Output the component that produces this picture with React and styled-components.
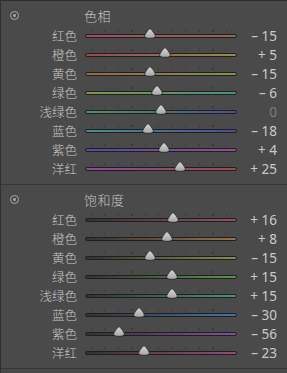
import styled, { createGlobalStyle } from 'styled-components';

const Global = createGlobalStyle`
  body {
    margin: 0;
    background: #4a4a4a;
    font-family: "Noto Sans", "Noto Sans CJK SC", sans-serif;
  }
`;

const Panel = styled.div`
  width: 287px;
  height: 373px;
  box-sizing: border-box;
  background: #4a4a4a;
  border-top: 1px solid #2c2c2c;
  border-left: 1px solid #303030;
  overflow: hidden;
`;

const Section = styled.div`
  padding: 3px 0 6px;
  border-bottom: 1px solid #363636;
`;

const Header = styled.div`
  height: 22px;
  display: grid;
  grid-template-columns: 83px 1fr;
  align-items: center;
`;

const Toggle = styled.span`
  justify-self: start;
  margin-left: 9px;
  width: 9px;
  height: 9px;
  border-radius: 50%;
  box-sizing: border-box;
  border: 1.5px solid #a8a8a8;
  display: flex;
  align-items: center;
  justify-content: center;
  &::after {
    content: '';
    width: 3px;
    height: 3px;
    border-radius: 50%;
    background: #a8a8a8;
  }
`;

const Title = styled.span`
  font-family: "Noto Sans CJK SC", sans-serif;
  font-size: 13px;
  font-weight: 300;
  color: #c4c4c4;
  letter-spacing: 0.5px;
`;

const Row = styled.div`
  height: 19px;
  display: grid;
  grid-template-columns: 76px 8px 152px 1fr;
  align-items: center;
`;

const Label = styled.span`
  grid-column: 1;
  text-align: right;
  font-family: "Noto Sans CJK SC", sans-serif;
  font-size: 12.5px;
  font-weight: 300;
  color: #cacaca;
  line-height: 19px;
`;

const Track = styled.div`
  grid-column: 3;
  position: relative;
  height: 4px;
  border-radius: 2px;
  border: 1px solid #1f1f1f;
  box-sizing: border-box;
  background: linear-gradient(to right, ${p => p.$from}, ${p => p.$to});
  &::before {
    content: '';
    position: absolute;
    left: 5px;
    right: 5px;
    top: -5px;
    height: 2px;
    background: repeating-linear-gradient(
      to right,
      #3a3a3a 0 1px,
      transparent 1px 13.5px
    );
  }
`;

const Thumb = styled.svg`
  position: absolute;
  top: -7px;
  width: 12px;
  height: 11px;
  transform: translateX(-50%);
`;

const Value = styled.span`
  grid-column: 4;
  text-align: right;
  padding-right: 10px;
  font-size: 13.5px;
  color: ${p => (p.$dim ? '#7c7c7c' : '#cacaca')};
  white-space: pre;
`;

const hue = [
  { name: '红色', value: -15, from: '#9a5068', to: '#94684a' },
  { name: '橙色', value: 5, from: '#964a4c', to: '#928c52' },
  { name: '黄色', value: -15, from: '#946a48', to: '#84924e' },
  { name: '绿色', value: -6, from: '#84944a', to: '#44928a' },
  { name: '浅绿色', value: 0, from: '#4e945c', to: '#4c4e94' },
  { name: '蓝色', value: -18, from: '#42928e', to: '#524a96' },
  { name: '紫色', value: 4, from: '#524c9c', to: '#944e90' },
  { name: '洋红', value: 25, from: '#8a4c9a', to: '#964e4e' },
];

const sat = [
  { name: '红色', value: 16, from: '#333', to: '#984e62' },
  { name: '橙色', value: 8, from: '#333', to: '#98724a' },
  { name: '黄色', value: -15, from: '#333', to: '#8e8a4e' },
  { name: '绿色', value: 15, from: '#333', to: '#5c944a' },
  { name: '浅绿色', value: 15, from: '#333', to: '#4c9476' },
  { name: '蓝色', value: -30, from: '#333', to: '#4674a2' },
  { name: '紫色', value: -56, from: '#333', to: '#844e9c' },
  { name: '洋红', value: -23, from: '#333', to: '#984c76' },
];

function fmt(v) {
  if (v === 0) return '0';
  return v > 0 ? `+ ${v}` : `– ${-v}`;
}

function Slider({ item }) {
  const pct = ((item.value + 100) / 200) * 100;
  return (
    <Row>
      <Label>{item.name}</Label>
      <Track $from={item.from} $to={item.to}>
        <Thumb viewBox="0 0 11 10" style={{ left: `${pct}%` }}>
          <defs>
            <linearGradient id="tg" x1="0" y1="0" x2="0" y2="1">
              <stop offset="0" stopColor="#d8d8d8" />
              <stop offset="1" stopColor="#a4a4a4" />
            </linearGradient>
          </defs>
          <path
            d="M5.5 0.6 C6.6 0.6 10.4 5.8 10.4 7.4 C10.4 9 8.8 9.4 5.5 9.4 C2.2 9.4 0.6 9 0.6 7.4 C0.6 5.8 4.4 0.6 5.5 0.6 Z"
            fill="url(#tg)"
            stroke="#2a2a2a"
            strokeWidth="0.8"
          />
        </Thumb>
      </Track>
      <Value $dim={item.value === 0}>{fmt(item.value)}</Value>
    </Row>
  );
}

function Group({ title, items }) {
  return (
    <Section>
      <Header>
        <Toggle />
        <Title>{title}</Title>
      </Header>
      {items.map((it, i) => (
        <Slider key={i} item={it} />
      ))}
    </Section>
  );
}

export default function App() {
  return (
    <>
      <Global />
      <Panel>
        <Group title="色相" items={hue} />
        <Group title="饱和度" items={sat} />
      </Panel>
    </>
  );
}
